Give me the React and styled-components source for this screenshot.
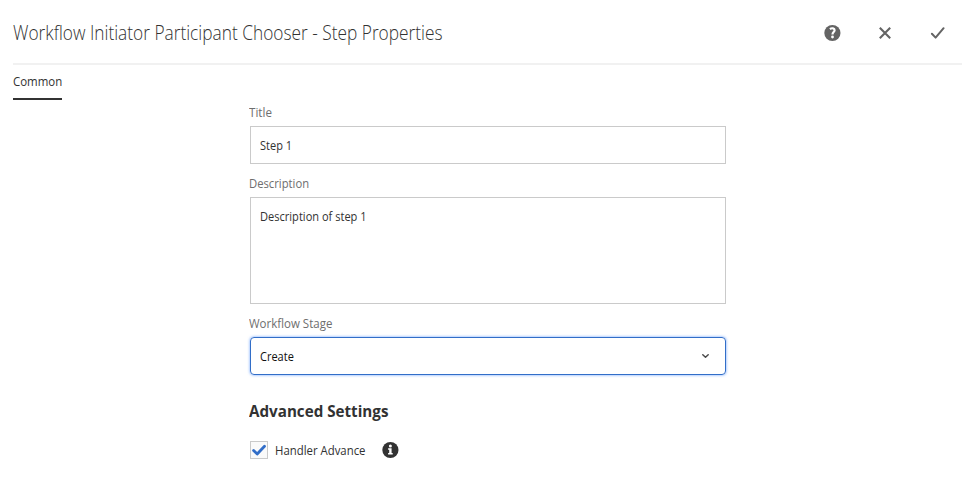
import React from "react";
import styled, { createGlobalStyle } from "styled-components";

const GlobalStyle = createGlobalStyle`
  * { box-sizing: border-box; }
  body { margin: 0; background: #fff; }
  button { border: 0; background: none; padding: 0; }
`;

const Page = styled.main`
  width: 973px;
  height: 481px;
  padding: 0 11px 0 13px;
  overflow: hidden;
  background: #fff;
  color: #323232;
  font-family: "Open Sans", "Noto Sans", sans-serif;
  font-size: 12.5px;
  line-height: 18px;
`;

const Narrow = styled.span`
  display: inline-block;
  transform: scaleX(${(p) => p.$ratio ?? 0.88});
  transform-origin: left center;
  white-space: nowrap;
`;

const Header = styled.header`
  display: flex;
  align-items: center;
  justify-content: space-between;
  height: 65px;
  border-bottom: 2px solid #f1f1f1;
`;

const Title = styled.h1`
  margin: 2px 0 0;
  font-size: 19.5px;
  line-height: 26px;
  font-weight: 300;
`;

const Actions = styled.div`
  display: flex;
  gap: 35px;
  margin: 2px 15px 0 0;
`;

const IconButton = styled.button`
  display: flex;
  width: 18px;
  height: 18px;
  color: #646464;
`;

const Tabs = styled.nav`
  display: flex;
  height: 35px;
`;

const Tab = styled.a`
  width: 49px;
  padding-top: 8px;
  border-bottom: 2px solid #323232;
`;

const Form = styled.form`
  width: 476px;
  margin-left: 237px;
`;

const Field = styled.div`
  height: ${(p) => p.$height}px;
`;

const Label = styled.label`
  display: block;
  height: 26px;
  padding-top: 4px;
  margin-left: -0.6px;
  color: #6e6e6e;
`;

const Control = styled.div`
  display: flex;
  align-items: flex-start;
  justify-content: space-between;
  height: ${(p) => p.$height}px;
  padding: 10px 15px 0 9.4px;
  border: 1px solid #cacaca;
`;

const Select = styled(Control)`
  border: 1.5px solid #326ec8;
  border-radius: 4px;
  box-shadow: 0 0 3px rgba(38, 118, 255, 0.7);
  color: #111;
`;

const Heading = styled.h2`
  margin: 25px 0 0 -1px;
  font-size: 16.5px;
  line-height: 22px;
  font-weight: 700;
`;

const CheckRow = styled.div`
  display: flex;
  align-items: center;
  height: 18px;
  margin-top: 19px;
`;

const Checkbox = styled.span`
  display: flex;
  width: 18px;
  height: 18px;
  border: 1px solid #cacaca;
  background: #fafafa;
`;

const CheckLabel = styled.span`
  width: 106px;
  margin-left: 7px;
  padding-top: 2px;
`;

const HelpIcon = () => (
  <svg width="18" height="18" viewBox="0 0 18 18">
    <circle cx="9.4" cy="9" r="8.1" fill="currentColor" />
    <path d="M6.9 5.1C8.8 3.7 11.6 4.1 11.6 6.3C11.6 8 9.5 8.2 9.5 10.4" fill="none" stroke="#fff" strokeWidth="2.2" />
    <circle cx="9.5" cy="13" r="1.4" fill="#fff" />
  </svg>
);

const CloseIcon = () => (
  <svg width="18" height="18" viewBox="0 0 18 18" fill="none" stroke="currentColor" strokeWidth="2.1">
    <path d="M3.8 3.8L14.2 14.2M14.2 3.8L3.8 14.2" />
  </svg>
);

const DoneIcon = () => (
  <svg width="18" height="18" viewBox="0 0 18 18" fill="none" stroke="currentColor" strokeWidth="2" strokeLinecap="round" strokeLinejoin="round">
    <path d="M2.9 9.8L6.6 13.6L14.6 4.2" />
  </svg>
);

const ChevronIcon = () => (
  <svg width="9" height="18" viewBox="0 0 9 18" fill="none" stroke="#4b4b4b" strokeWidth="1.5" strokeLinecap="round" strokeLinejoin="round">
    <path d="M1.8 6.7L4.5 9.2L7.2 6.7" />
  </svg>
);

const TickIcon = () => (
  <svg width="16" height="16" viewBox="0 0 16 16" fill="none" stroke="#326ec8" strokeWidth="2.8" strokeLinecap="round" strokeLinejoin="round">
    <path d="M2.6 8.5L6.2 12L13.5 4.2" />
  </svg>
);

const InfoIcon = () => (
  <svg width="18" height="18" viewBox="0 0 18 18">
    <circle cx="9.4" cy="9" r="8.1" fill="#323232" />
    <circle cx="9.4" cy="5" r="1.5" fill="#fff" />
    <path d="M7.1 7.3H10.6V12H11.7V13.4H7.1V12H8.2V8.7H7.1Z" fill="#fff" />
  </svg>
);

export default function App() {
  return (
    <>
      <GlobalStyle />
      <Page>
        <Header>
          <Title>
            <Narrow $ratio={0.887}>Workflow Initiator Participant Chooser - Step Properties</Narrow>
          </Title>
          <Actions>
            <IconButton type="button" aria-label="Help"><HelpIcon /></IconButton>
            <IconButton type="button" aria-label="Cancel"><CloseIcon /></IconButton>
            <IconButton type="button" aria-label="Done"><DoneIcon /></IconButton>
          </Actions>
        </Header>
        <Tabs><Tab><Narrow $ratio={0.917}>Common</Narrow></Tab></Tabs>
        <Form>
          <Field $height={71}>
            <Label><Narrow $ratio={0.93}>Title</Narrow></Label>
            <Control $height={38}><Narrow>Step 1</Narrow></Control>
          </Field>
          <Field $height={140}>
            <Label><Narrow $ratio={0.9}>Description</Narrow></Label>
            <Control $height={107}><Narrow $ratio={0.885}>Description of step 1</Narrow></Control>
          </Field>
          <Field $height={64}>
            <Label><Narrow $ratio={0.92}>Workflow Stage</Narrow></Label>
            <Select $height={38}><Narrow>Create</Narrow><ChevronIcon /></Select>
          </Field>
          <Heading><Narrow $ratio={0.92}>Advanced Settings</Narrow></Heading>
          <CheckRow>
            <Checkbox><TickIcon /></Checkbox>
            <CheckLabel><Narrow $ratio={0.91}>Handler Advance</Narrow></CheckLabel>
            <InfoIcon />
          </CheckRow>
        </Form>
      </Page>
    </>
  );
}
